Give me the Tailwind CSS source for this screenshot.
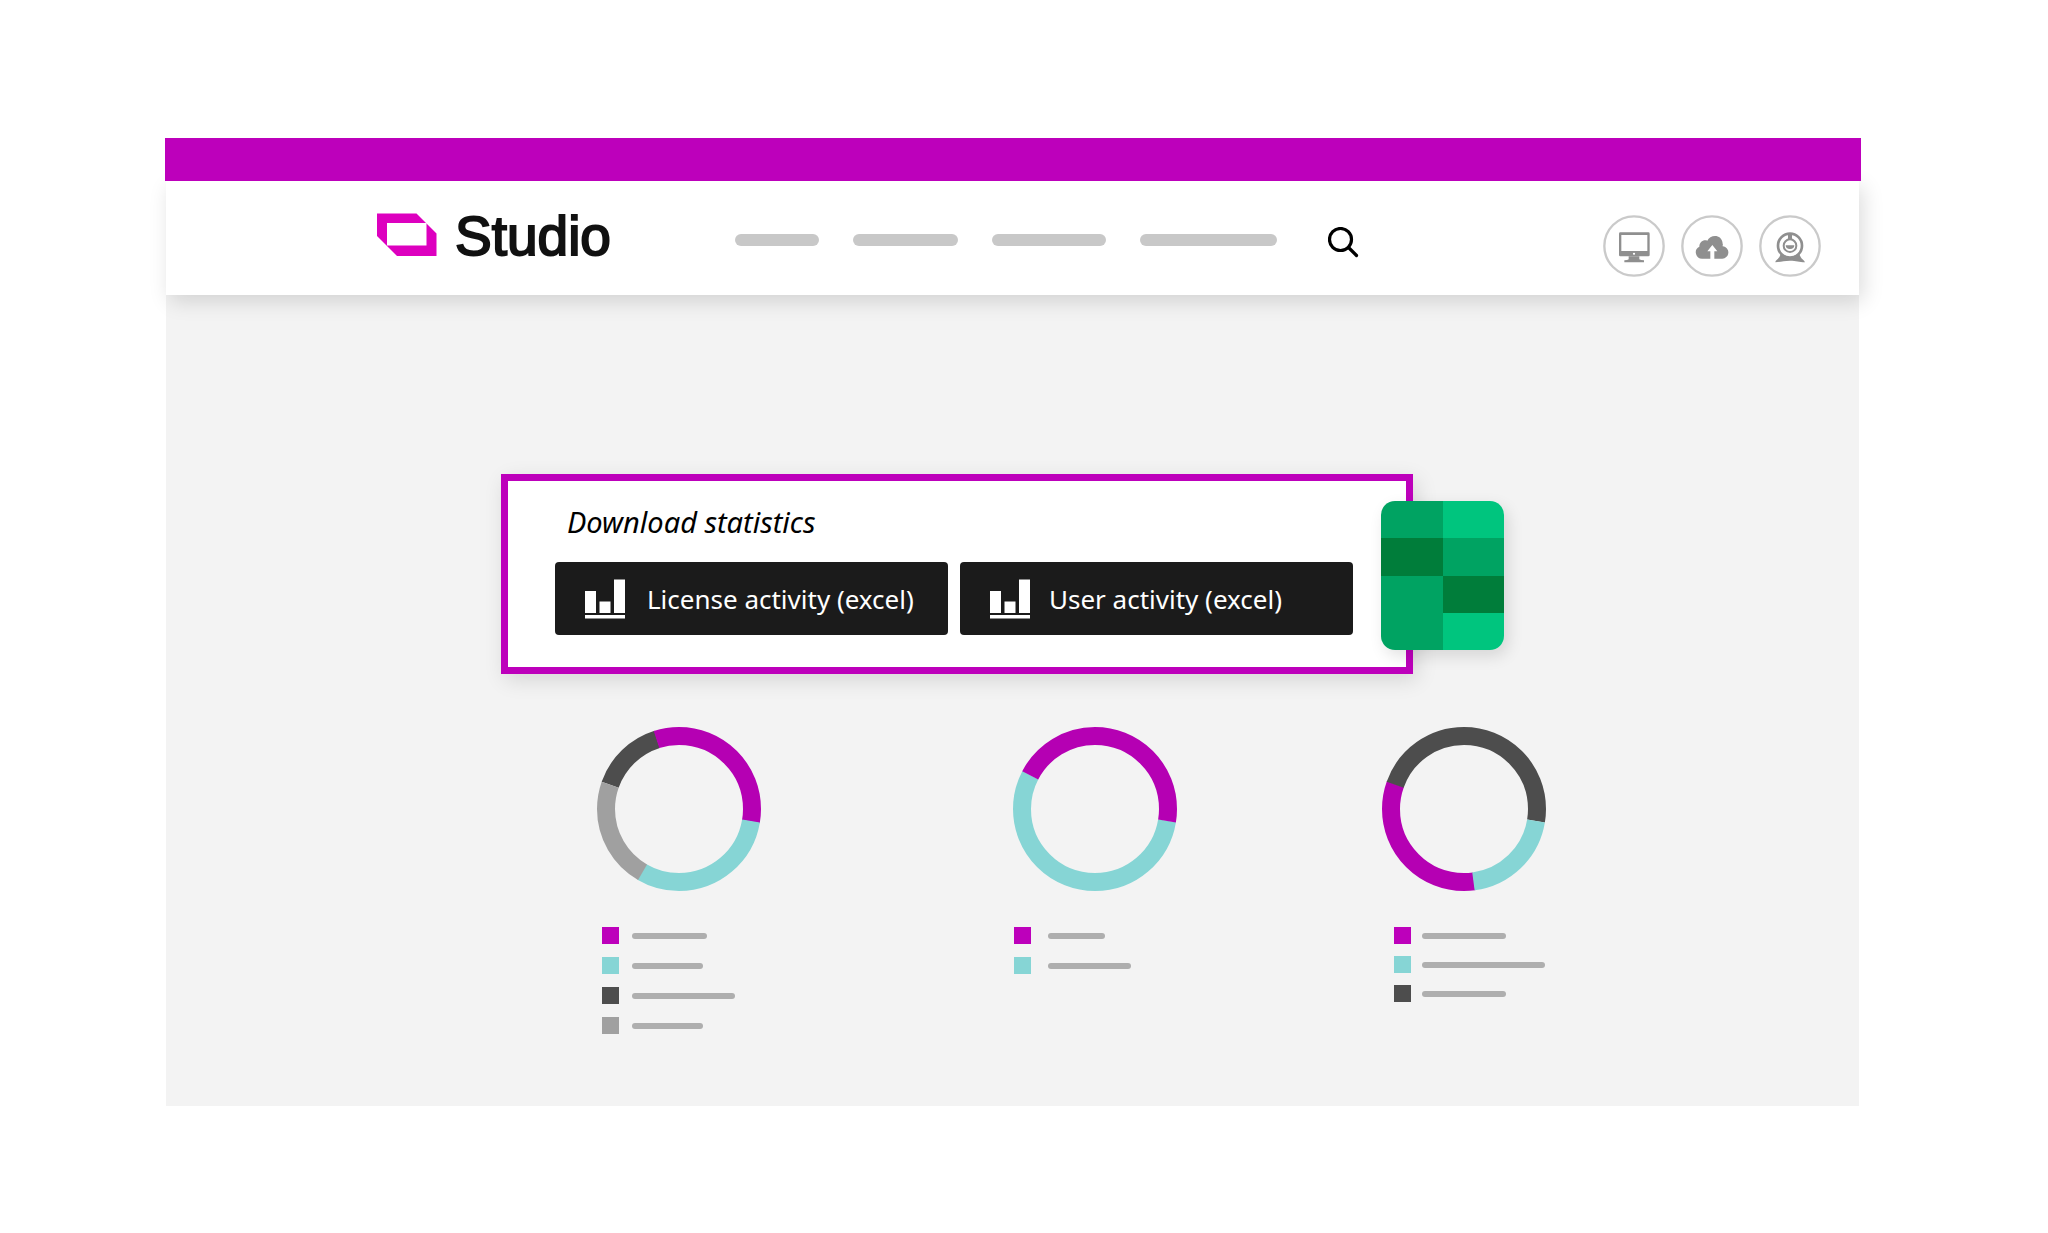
<!DOCTYPE html>
<html lang="en">
<head>
<meta charset="utf-8">
<meta name="viewport" content="width=device-width, initial-scale=1">
<title>Studio</title>
<script src="https://cdn.jsdelivr.net/npm/@tailwindcss/browser@4"></script>
</head>
<body class="bg-white px-[165px] pt-[138px] pb-32 font-['Noto_Sans',sans-serif]">
  <div class="relative z-10 mr-[22px] h-[43px] bg-[#bd00bb]"></div>

  <div class="ml-px mr-6">
    <header class="relative flex h-[114px] items-start bg-white pt-8 pr-[38px] pl-[211px] shadow-[4px_6px_20px_rgba(0,0,0,0.14)]">
      <a href="#" class="flex items-start gap-[18px]">
        <svg class="h-[43px] w-[60px]" viewBox="0 0 60 43" aria-hidden="true">
          <path fill="#dd00bf" fill-rule="evenodd" d="M0 .5h39.5L59.5 20.500V43H20L0 23zM10 10v22.500h39.500V10z"/>
        </svg>
        <span class="font-['Liberation_Sans',sans-serif] text-[55px] leading-[46px] text-[#111] [-webkit-text-stroke:2px_#111]">Studio</span>
      </a>
      <nav class="ml-auto mt-[21px] flex gap-[34px]" aria-label="Main">
        <a href="#" aria-label="Menu item 1" class="h-3 w-[84px] rounded-full bg-[#c8c8c8]"></a>
        <a href="#" aria-label="Menu item 2" class="h-3 w-[105px] rounded-full bg-[#c8c8c8]"></a>
        <a href="#" aria-label="Menu item 3" class="h-3 w-[114px] rounded-full bg-[#c8c8c8]"></a>
        <a href="#" aria-label="Menu item 4" class="h-3 w-[137px] rounded-full bg-[#c8c8c8]"></a>
      </nav>
      <button type="button" aria-label="Search" class="mt-3.5 ml-[51px]">
        <svg class="size-[31px]" viewBox="0 0 31 31" fill="none" stroke="#000" stroke-width="3.200" stroke-linecap="round" aria-hidden="true">
          <circle cx="12.500" cy="12.500" r="11"/><path d="M20.500 20.500l8 8"/>
        </svg>
      </button>
      <div class="mt-0.5 ml-[244px] flex gap-4">
        <button type="button" aria-label="Desktop">
          <svg class="size-[62px]" viewBox="0 0 186 186" aria-hidden="true">
            <circle cx="93" cy="93" r="89" fill="#fff" stroke="#cacaca" stroke-width="7"/>
            <path fill="#8f8f8f" fill-rule="evenodd" d="M52 52h84q4 0 4 4v64q0 4-4 4H52q-4 0-4-4V56q0-4 4-4zM55 60v48h78V60zM93 113a3 3 0 1 0 .1 0z"/>
            <path fill="#8f8f8f" d="M77 124h32v9q4 3 14 3v6H64v-6q10 0 13-3z"/>
          </svg>
        </button>
        <button type="button" aria-label="Upload">
          <svg class="size-[62px]" viewBox="0 0 186 186" aria-hidden="true">
            <circle cx="93" cy="93" r="89" fill="#fff" stroke="#cacaca" stroke-width="7"/>
            <path fill="#8f8f8f" d="M64 131a19 19 0 0 1-9-36c0-14 12-22 24-18 8-19 44-21 46 9 2 4-1 6 0 8 24 4 22 35-1 37z"/>
            <path fill="#fff" d="M94 90l15 19h-9v23H88v-23h-9z"/>
          </svg>
        </button>
        <button type="button" aria-label="Webcam">
          <svg class="size-[62px]" viewBox="0 0 186 186" aria-hidden="true">
            <circle cx="93" cy="93" r="89" fill="#fff" stroke="#cacaca" stroke-width="7"/>
            <path fill="#8f8f8f" d="M49 142c1-8 11-8 16-25h56c5 17 15 17 17 25-18-1-26-5-45-5s-27 4-44 5z"/>
            <circle cx="93" cy="92" r="36" fill="#fff" stroke="#8f8f8f" stroke-width="8"/>
            <path fill="#8f8f8f" d="M87 54h12v20H87zM80 91h26a13 11 0 0 1-26 0z"/>
            <circle cx="93" cy="92" r="19" fill="none" stroke="#8f8f8f" stroke-width="6"/>
          </svg>
        </button>
      </div>
    </header>

    <main class="min-h-[811px] bg-[#f3f3f3] pt-[179px] pl-[335px]">
      <section class="relative w-[912px] border-[7px] border-[#bd00bb] bg-white pt-[21px] pr-[53px] pb-8 pl-[47px] shadow-[4px_6px_20px_rgba(0,0,0,0.12)]">
        <h2 class="pl-3 text-[29px] leading-[40px] text-black italic">Download statistics</h2>
        <div class="mt-5 grid grid-cols-2 gap-3 text-[26px] text-white">
          <button type="button" class="flex h-[73px] items-center gap-[21px] rounded bg-[#1b1b1b] pl-[30px]">
            <svg class="h-10 w-[41px]" viewBox="0 0 41 40" fill="#fff" aria-hidden="true"><path d="M0 12h11v22H0zM14.500 22.500h11V34h-11zM29 .5h11V34H29zM0 36h40v3.500H0z"/></svg>
            <span class="pt-0.5">License activity (excel)</span>
          </button>
          <button type="button" class="flex h-[73px] items-center gap-[18px] rounded bg-[#1b1b1b] pl-[30px]">
            <svg class="h-10 w-[41px]" viewBox="0 0 41 40" fill="#fff" aria-hidden="true"><path d="M0 12h11v22H0zM14.500 22.500h11V34h-11zM29 .5h11V34H29zM0 36h40v3.500H0z"/></svg>
            <span class="pt-0.5">User activity (excel)</span>
          </button>
        </div>
        <!-- spreadsheet badge over the panel's right edge -->
        <div class="absolute top-5 -right-[98px] grid h-[149px] w-[123px] grid-cols-2 grid-rows-4 overflow-hidden rounded-[14px] shadow-[4px_6px_16px_rgba(0,0,0,0.12)]">
          <div class="bg-[#00a362]"></div><div class="bg-[#00c57e]"></div>
          <div class="bg-[#007d3a]"></div><div class="bg-[#00a362]"></div>
          <div class="row-span-2 bg-[#00a362]"></div><div class="bg-[#007d3a]"></div>
          <div class="bg-[#00c57e]"></div>
        </div>
      </section>

      <section class="mt-[53px] flex items-start pl-24" aria-label="Charts">
        <figure class="w-[164px]">
          <svg class="size-[164px]" viewBox="0 0 164 164" fill="none" stroke-width="18" role="img" aria-label="Chart 1">
            <g transform="rotate(-90 82 82)">
              <circle cx="82" cy="82" r="73" pathLength="360" stroke="#4d4d4d" stroke-dasharray="53 307" stroke-dashoffset="-289.500"/>
              <circle cx="82" cy="82" r="73" pathLength="360" stroke="#b500b3" stroke-dasharray="118 242" stroke-dashoffset="18"/>
              <circle cx="82" cy="82" r="73" pathLength="360" stroke="#86d5d5" stroke-dasharray="111 249" stroke-dashoffset="-99.500"/>
              <circle cx="82" cy="82" r="73" pathLength="360" stroke="#a0a0a0" stroke-dasharray="79.500 280.500" stroke-dashoffset="-210"/>
            </g>
          </svg>
          <ul class="mt-9 grid gap-[13px] pl-[5px]">
            <li class="flex items-center gap-[13px]"><span class="size-[17px] bg-[#bd00bb]"></span><span class="h-1.5 w-[75px] rounded-full bg-[#aeaeae]"></span></li>
            <li class="flex items-center gap-[13px]"><span class="size-[17px] bg-[#86d5d5]"></span><span class="h-1.5 w-[71px] rounded-full bg-[#aeaeae]"></span></li>
            <li class="flex items-center gap-[13px]"><span class="size-[17px] bg-[#4d4d4d]"></span><span class="h-1.5 w-[103px] rounded-full bg-[#aeaeae]"></span></li>
            <li class="flex items-center gap-[13px]"><span class="size-[17px] bg-[#a0a0a0]"></span><span class="h-1.5 w-[71px] rounded-full bg-[#aeaeae]"></span></li>
          </ul>
        </figure>
        <figure class="ml-[252px] w-[164px]">
          <svg class="size-[164px]" viewBox="0 0 164 164" fill="none" stroke-width="18" role="img" aria-label="Chart 2">
            <g transform="rotate(-90 82 82)">
              <circle cx="82" cy="82" r="73" pathLength="360" stroke="#86d5d5" stroke-dasharray="198.500 161.500" stroke-dashoffset="-99.250"/>
              <circle cx="82" cy="82" r="73" pathLength="360" stroke="#b500b3" stroke-dasharray="162 198" stroke-dashoffset="62.500"/>
            </g>
          </svg>
          <ul class="mt-9 grid gap-[13px] pl-px">
            <li class="flex items-center gap-[17px]"><span class="size-[17px] bg-[#bd00bb]"></span><span class="h-1.5 w-[57px] rounded-full bg-[#aeaeae]"></span></li>
            <li class="flex items-center gap-[17px]"><span class="size-[17px] bg-[#86d5d5]"></span><span class="h-1.5 w-[83px] rounded-full bg-[#aeaeae]"></span></li>
          </ul>
        </figure>
        <figure class="ml-[205px] w-[164px]">
          <svg class="size-[164px]" viewBox="0 0 164 164" fill="none" stroke-width="18" role="img" aria-label="Chart 3">
            <g transform="rotate(-90 82 82)">
              <circle cx="82" cy="82" r="73" pathLength="360" stroke="#b500b3" stroke-dasharray="118 242" stroke-dashoffset="-172"/>
              <circle cx="82" cy="82" r="73" pathLength="360" stroke="#4d4d4d" stroke-dasharray="170 190" stroke-dashoffset="70.500"/>
              <circle cx="82" cy="82" r="73" pathLength="360" stroke="#86d5d5" stroke-dasharray="73 287" stroke-dashoffset="-99.500"/>
            </g>
          </svg>
          <ul class="mt-9 grid gap-3 pl-3">
            <li class="flex items-center gap-[11px]"><span class="size-[17px] bg-[#bd00bb]"></span><span class="h-1.5 w-[84px] rounded-full bg-[#aeaeae]"></span></li>
            <li class="flex items-center gap-[11px]"><span class="size-[17px] bg-[#86d5d5]"></span><span class="h-1.5 w-[123px] rounded-full bg-[#aeaeae]"></span></li>
            <li class="flex items-center gap-[11px]"><span class="size-[17px] bg-[#4d4d4d]"></span><span class="h-1.5 w-[84px] rounded-full bg-[#aeaeae]"></span></li>
          </ul>
        </figure>
      </section>
    </main>
  </div>
</body>
</html>
